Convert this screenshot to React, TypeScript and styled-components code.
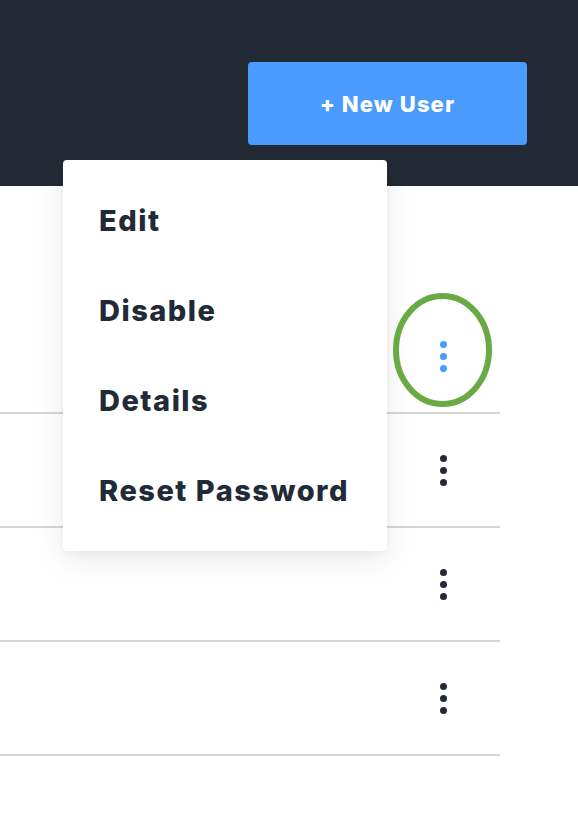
import React from "react";
import styled, { createGlobalStyle } from "styled-components";

const Global = createGlobalStyle`
  html, body { margin: 0; padding: 0; background: #ffffff; }
  body { font-family: Inter, "Noto Sans", sans-serif; }
  * { box-sizing: border-box; }
`;

const Page = styled.div`
  position: relative;
  width: 578px;
  height: 820px;
  overflow: hidden;
  background: #ffffff;
`;

const Header = styled.header`
  height: 186px;
  background: #222a35;
  display: flex;
  justify-content: flex-end;
  align-items: flex-start;
  padding: 62px 51px 0 0;
`;

const PrimaryButton = styled.button`
  width: 279px;
  height: 83px;
  border: none;
  border-radius: 4px;
  background: #4a9bfd;
  color: #ffffff;
  font-family: Inter, "Noto Sans", sans-serif;
  font-weight: 800;
  font-size: 22px;
  letter-spacing: 1.1px;
  cursor: pointer;
`;

const Table = styled.div`
  width: 500px;
  display: flex;
  flex-direction: column;
`;

const Row = styled.div<{ $noLine?: boolean }>`
  height: 114px;
  display: flex;
  align-items: center;
  justify-content: flex-end;
  padding-right: 37px;
  border-bottom: 2px solid ${(p) => (p.$noLine ? "transparent" : "#d6d6d6")};
`;

const Kebab = styled.button<{ $active?: boolean }>`
  width: 40px;
  height: 40px;
  border: none;
  background: transparent;
  padding: 0;
  display: flex;
  flex-direction: column;
  align-items: center;
  justify-content: center;
  gap: 5px;
  cursor: pointer;
  color: ${(p) => (p.$active ? "#4a9bfd" : "#222a35")};
`;

const Dot = styled.span`
  width: 7px;
  height: 7px;
  border-radius: 50%;
  background: currentColor;
`;

const Menu = styled.ul`
  position: absolute;
  left: 63px;
  top: 160px;
  width: 324px;
  margin: 0;
  padding: 15px 0 16px;
  list-style: none;
  background: #ffffff;
  border-radius: 4px;
  box-shadow: 0 8px 30px rgba(0, 0, 0, 0.09), 0 2px 6px rgba(0, 0, 0, 0.04);
`;

const MenuItem = styled.li`
  height: 90px;
  display: flex;
  align-items: center;
  padding-left: 36px;
  font-family: Inter, "Noto Sans", sans-serif;
  font-weight: 800;
  font-size: 29px;
  letter-spacing: 1.5px;
  color: #212a36;
  cursor: pointer;
`;

const Highlight = styled.svg`
  position: absolute;
  left: 390px;
  top: 290px;
  pointer-events: none;
`;

const KebabButton = ({ active }: { active?: boolean }) => (
  <Kebab $active={active} aria-label="More actions">
    <Dot />
    <Dot />
    <Dot />
  </Kebab>
);

export default function App() {
  return (
    <Page>
      <Global />
      <Header>
        <PrimaryButton>+ New User</PrimaryButton>
      </Header>
      <Table>
        <Row $noLine />
        <Row>
          <KebabButton active />
        </Row>
        <Row>
          <KebabButton />
        </Row>
        <Row>
          <KebabButton />
        </Row>
        <Row>
          <KebabButton />
        </Row>
      </Table>
      <Menu>
        <MenuItem>Edit</MenuItem>
        <MenuItem>Disable</MenuItem>
        <MenuItem>Details</MenuItem>
        <MenuItem>Reset Password</MenuItem>
      </Menu>
      <Highlight width="106" height="122" viewBox="0 0 106 122">
        <ellipse cx="52.5" cy="60" rx="46.5" ry="54" fill="none" stroke="#6aaa44" strokeWidth="6" />
      </Highlight>
    </Page>
  );
}
